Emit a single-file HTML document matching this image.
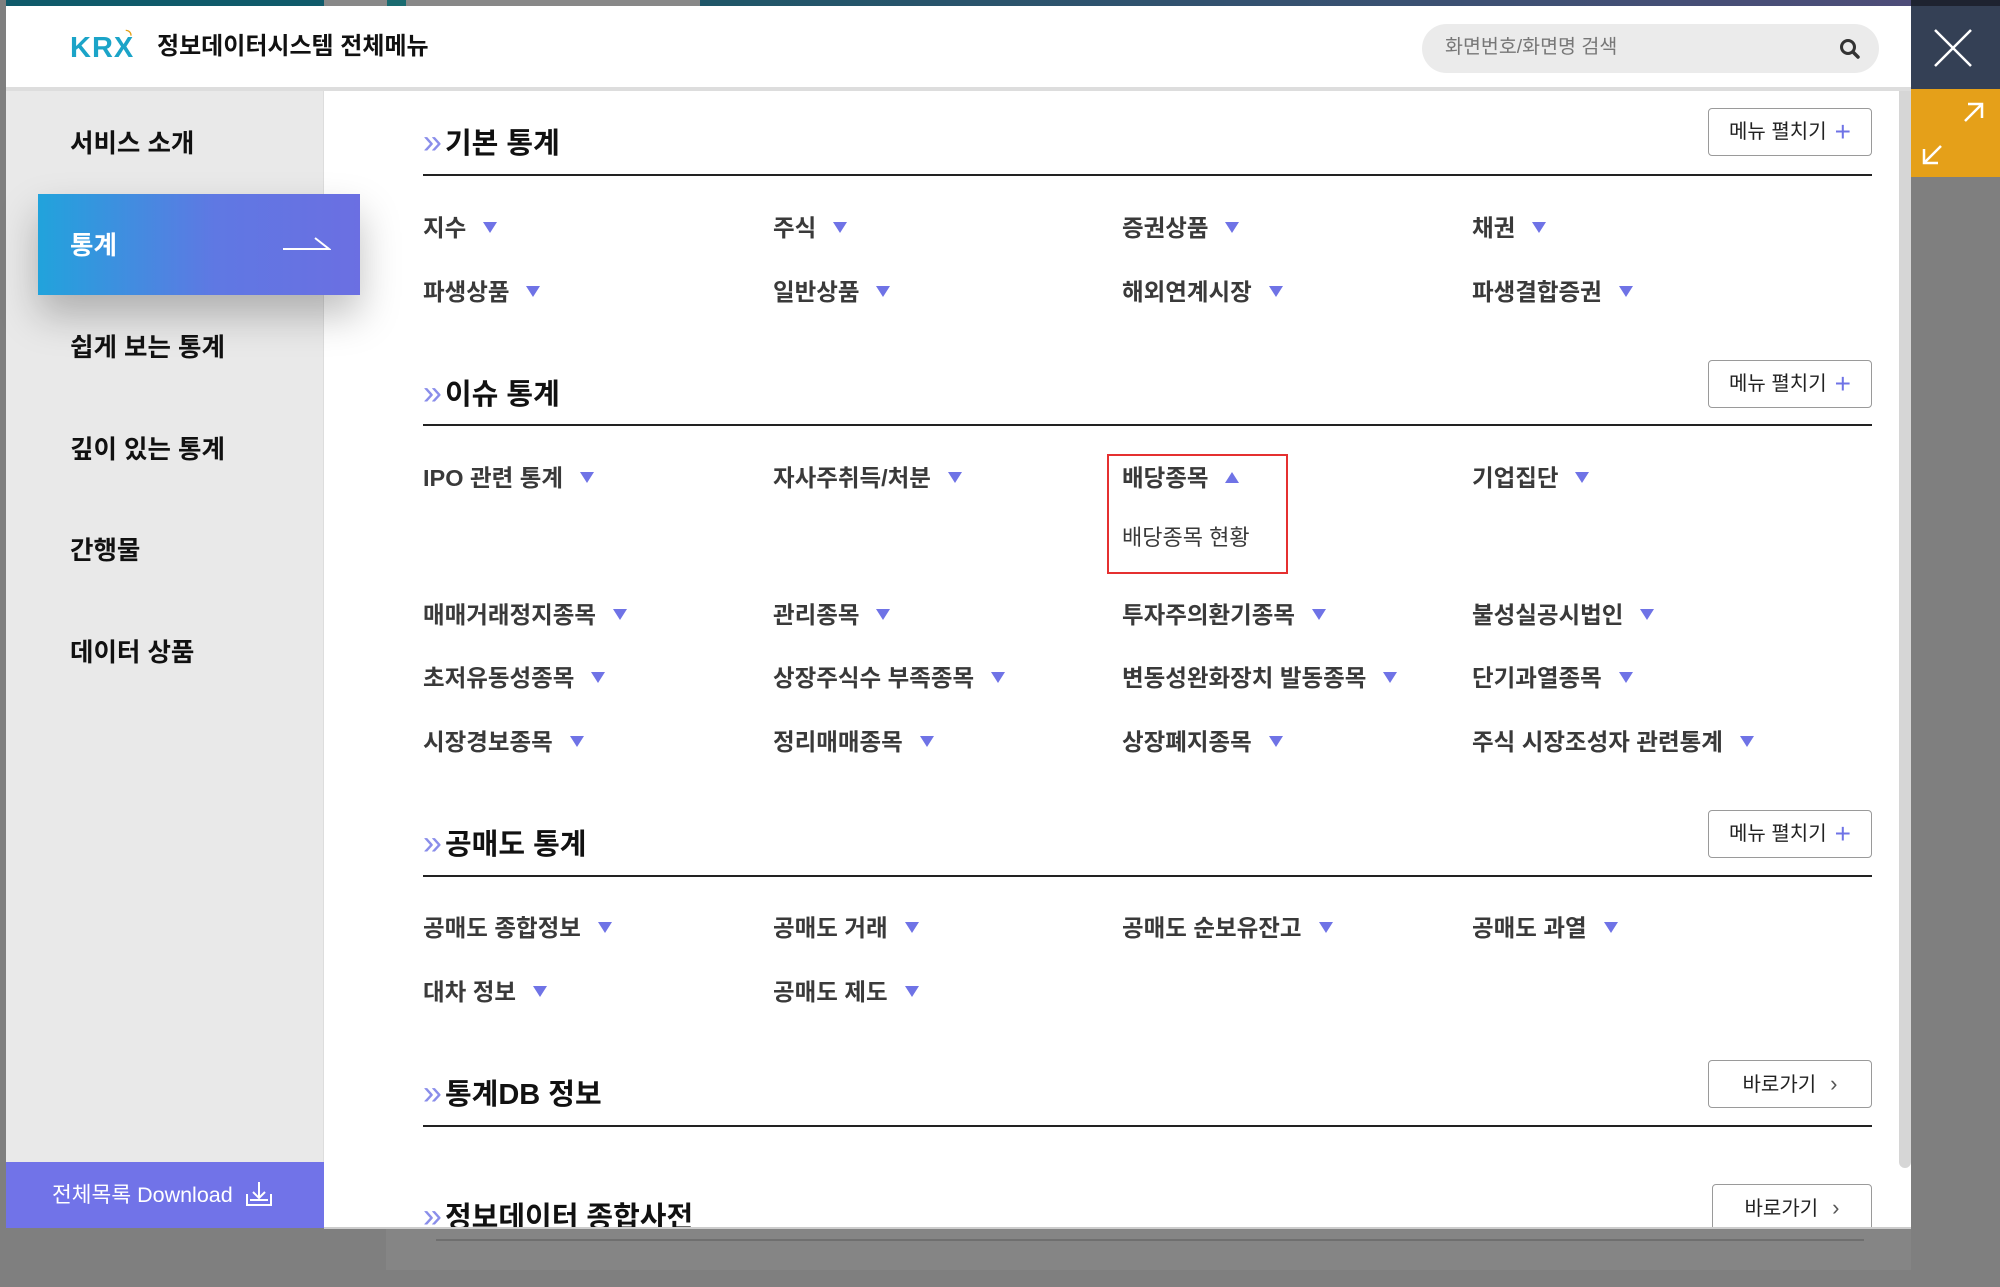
<!DOCTYPE html>
<html><head><meta charset="utf-8"><style>
*{margin:0;padding:0;box-sizing:border-box}
body{width:2000px;height:1287px;background:#7f7f7f;position:relative;overflow:hidden;font-family:"Liberation Sans","Noto Sans CJK KR",sans-serif;color:#222}
.a{position:absolute;white-space:nowrap}
.t{line-height:1}
.item{position:absolute;font-size:23.5px;font-weight:700;color:#3a3a3a;line-height:30px;white-space:nowrap}
.tri{display:inline-block;width:0;height:0;border-left:7px solid transparent;border-right:7px solid transparent;border-top:11px solid #6f73e6;margin-left:17px;vertical-align:3px}
.up{border-top:0;border-bottom:11px solid #6f73e6}
.sec{position:absolute;left:423px;font-size:29px;font-weight:700;color:#111;line-height:36px}
.sec b{color:#8a8eea;font-weight:400;font-size:34px;margin-right:4px;letter-spacing:-9px}
.line{position:absolute;left:423px;width:1449px;height:2px;background:#222}
.btn{position:absolute;left:1708px;width:164px;height:48px;border:1.5px solid #9a9a9a;border-radius:4px;background:#fff;font-size:20px;color:#222;line-height:45px;text-align:center}
.btn i{font-style:normal;color:#6f73e6;font-size:28px;vertical-align:-3px;margin-left:8px}
.side{position:absolute;left:70px;font-size:25.5px;font-weight:700;color:#111;line-height:30px}
</style></head><body>
<div class="a" style="left:386px;top:1228px;width:1525px;height:42px;background:#858585"></div>
<div class="a" style="left:436px;top:1239px;width:1428px;height:2px;background:#6f6f6f"></div>
<div class="a" style="left:6px;top:0;width:1905px;height:6px;background:linear-gradient(90deg,#0f5a6a 0,#0f5a6a 318px,#888 318px,#888 381px,#1a6b70 381px,#1a6b70 400px,#888 400px,#888 694px,#1f5668 694px,#4e4d79 100%)"></div>
<div class="a" style="left:6px;top:6px;width:1905px;height:1222px;background:#fff"></div>
<div class="a" style="left:6px;top:87px;width:1905px;height:4px;background:#ddd"></div>
<div class="a t" style="left:70px;top:34px;font-size:29px;font-weight:700;color:#1ba4c8;font-family:'Liberation Sans',sans-serif;letter-spacing:1px">KRX<span style="position:absolute;left:56px;top:-7px;font-size:14px;color:#e5a019">◝</span></div>
<div class="a t" style="left:157px;top:35px;font-size:24px;font-weight:700;color:#111">정보데이터시스템 전체메뉴</div>
<div class="a" style="left:1422px;top:24px;width:457px;height:49px;border-radius:25px;background:#ebebeb"></div>
<div class="a t" style="left:1445px;top:38px;font-size:19.5px;color:#777">화면번호/화면명 검색</div>
<svg class="a" style="left:1838px;top:37px" width="24" height="24" viewBox="0 0 24 24"><circle cx="10" cy="10" r="6.5" fill="none" stroke="#333" stroke-width="3"/><path d="M15 15l5 5" stroke="#333" stroke-width="3.5" stroke-linecap="round"/></svg>
<div class="a" style="left:1911px;top:0;width:89px;height:6px;background:#1e2330"></div>
<div class="a" style="left:1911px;top:6px;width:89px;height:83px;background:#344055"></div>
<svg class="a" style="left:1911px;top:6px" width="89" height="83"><path d="M24 24L60 60M60 24L24 60" stroke="#fff" stroke-width="2.5"/></svg>
<div class="a" style="left:1911px;top:89px;width:89px;height:88px;background:#e5a019"></div>
<svg class="a" style="left:1911px;top:89px" width="89" height="88"><path d="M54 32L71 15M57 15H71V29M13 74L30 57M13 60V74H27" stroke="#fff" stroke-width="2.5" fill="none"/></svg>
<div class="a" style="left:6px;top:91px;width:318px;height:1137px;background:#e9e9e9;border-right:1px solid #ddd"></div>
<div class="side" style="top:129px">서비스 소개</div>
<div class="a" style="left:38px;top:194px;width:322px;height:101px;background:linear-gradient(90deg,#21a3dc,#5f78e3 55%,#6b6fe2);box-shadow:0 20px 40px rgba(0,0,0,.25)"></div>
<div class="side" style="top:231px;color:#fff">통계</div>
<svg class="a" style="left:283px;top:232px" width="48" height="20"><path d="M0 17H46L32 6" stroke="#fff" stroke-width="2" fill="none"/></svg>
<div class="side" style="top:333px">쉽게 보는 통계</div>
<div class="side" style="top:435px">깊이 있는 통계</div>
<div class="side" style="top:536px">간행물</div>
<div class="side" style="top:638px">데이터 상품</div>
<div class="a" style="left:6px;top:1162px;width:318px;height:66px;background:#7173e8"></div>
<div class="a t" style="left:52px;top:1185px;font-size:21.5px;color:#fff">전체목록 Download</div>
<svg class="a" style="left:244px;top:1180px" width="30" height="28"><path d="M15 2V18M9 12L15 18L21 12M3 14V25H27V14M6 20H24" stroke="#fff" stroke-width="2" fill="none"/></svg>
<div class="a" style="left:1899px;top:91px;width:12px;height:1077px;background:#d6d6d6;border-radius:0 0 6px 6px"></div>
<div class="sec" style="top:124px"><b>»</b> 기본 통계</div>
<div class="btn" style="top:108px">메뉴 펼치기<i>+</i></div>
<div class="line" style="top:174px"></div>
<div class="item" style="left:423px;top:213px">지수<span class="tri"></span></div>
<div class="item" style="left:773px;top:213px">주식<span class="tri"></span></div>
<div class="item" style="left:1122px;top:213px">증권상품<span class="tri"></span></div>
<div class="item" style="left:1472px;top:213px">채권<span class="tri"></span></div>
<div class="item" style="left:423px;top:277px">파생상품<span class="tri"></span></div>
<div class="item" style="left:773px;top:277px">일반상품<span class="tri"></span></div>
<div class="item" style="left:1122px;top:277px">해외연계시장<span class="tri"></span></div>
<div class="item" style="left:1472px;top:277px">파생결합증권<span class="tri"></span></div>
<div class="sec" style="top:375px"><b>»</b> 이슈 통계</div>
<div class="btn" style="top:360px">메뉴 펼치기<i>+</i></div>
<div class="line" style="top:424px"></div>
<div class="item" style="left:423px;top:463px">IPO 관련 통계<span class="tri"></span></div>
<div class="item" style="left:773px;top:463px">자사주취득/처분<span class="tri"></span></div>
<div class="a" style="left:1107px;top:454px;width:181px;height:120px;border:2px solid #e53030"></div>
<div class="item" style="left:1122px;top:463px">배당종목<span class="tri up"></span></div>
<div class="item" style="left:1122px;top:523px;font-weight:400;font-size:22px">배당종목 현황</div>
<div class="item" style="left:1472px;top:463px">기업집단<span class="tri"></span></div>
<div class="item" style="left:423px;top:600px">매매거래정지종목<span class="tri"></span></div>
<div class="item" style="left:773px;top:600px">관리종목<span class="tri"></span></div>
<div class="item" style="left:1122px;top:600px">투자주의환기종목<span class="tri"></span></div>
<div class="item" style="left:1472px;top:600px">불성실공시법인<span class="tri"></span></div>
<div class="item" style="left:423px;top:663px">초저유동성종목<span class="tri"></span></div>
<div class="item" style="left:773px;top:663px">상장주식수 부족종목<span class="tri"></span></div>
<div class="item" style="left:1122px;top:663px">변동성완화장치 발동종목<span class="tri"></span></div>
<div class="item" style="left:1472px;top:663px">단기과열종목<span class="tri"></span></div>
<div class="item" style="left:423px;top:727px">시장경보종목<span class="tri"></span></div>
<div class="item" style="left:773px;top:727px">정리매매종목<span class="tri"></span></div>
<div class="item" style="left:1122px;top:727px">상장폐지종목<span class="tri"></span></div>
<div class="item" style="left:1472px;top:727px">주식 시장조성자 관련통계<span class="tri"></span></div>
<div class="sec" style="top:825px"><b>»</b> 공매도 통계</div>
<div class="btn" style="top:810px">메뉴 펼치기<i>+</i></div>
<div class="line" style="top:875px"></div>
<div class="item" style="left:423px;top:913px">공매도 종합정보<span class="tri"></span></div>
<div class="item" style="left:773px;top:913px">공매도 거래<span class="tri"></span></div>
<div class="item" style="left:1122px;top:913px">공매도 순보유잔고<span class="tri"></span></div>
<div class="item" style="left:1472px;top:913px">공매도 과열<span class="tri"></span></div>
<div class="item" style="left:423px;top:977px">대차 정보<span class="tri"></span></div>
<div class="item" style="left:773px;top:977px">공매도 제도<span class="tri"></span></div>
<div class="sec" style="top:1075px"><b>»</b> 통계DB 정보</div>
<div class="btn" style="top:1060px">바로가기<i style="color:#555;font-size:22px;margin-left:14px;vertical-align:0">›</i></div>
<div class="line" style="top:1125px"></div>
<div style="position:absolute;left:0;top:0;width:2000px;height:1228px;overflow:hidden">
<div class="sec" style="top:1198px"><b>»</b> 정보데이터 종합사전</div>
<div class="btn" style="top:1184px;left:1712px;width:160px">바로가기<i style="color:#555;font-size:22px;margin-left:14px;vertical-align:0">›</i></div>
</div>
<div class="a" style="left:324px;top:1227px;width:1587px;height:2px;background:#ccc"></div>
</body></html>
